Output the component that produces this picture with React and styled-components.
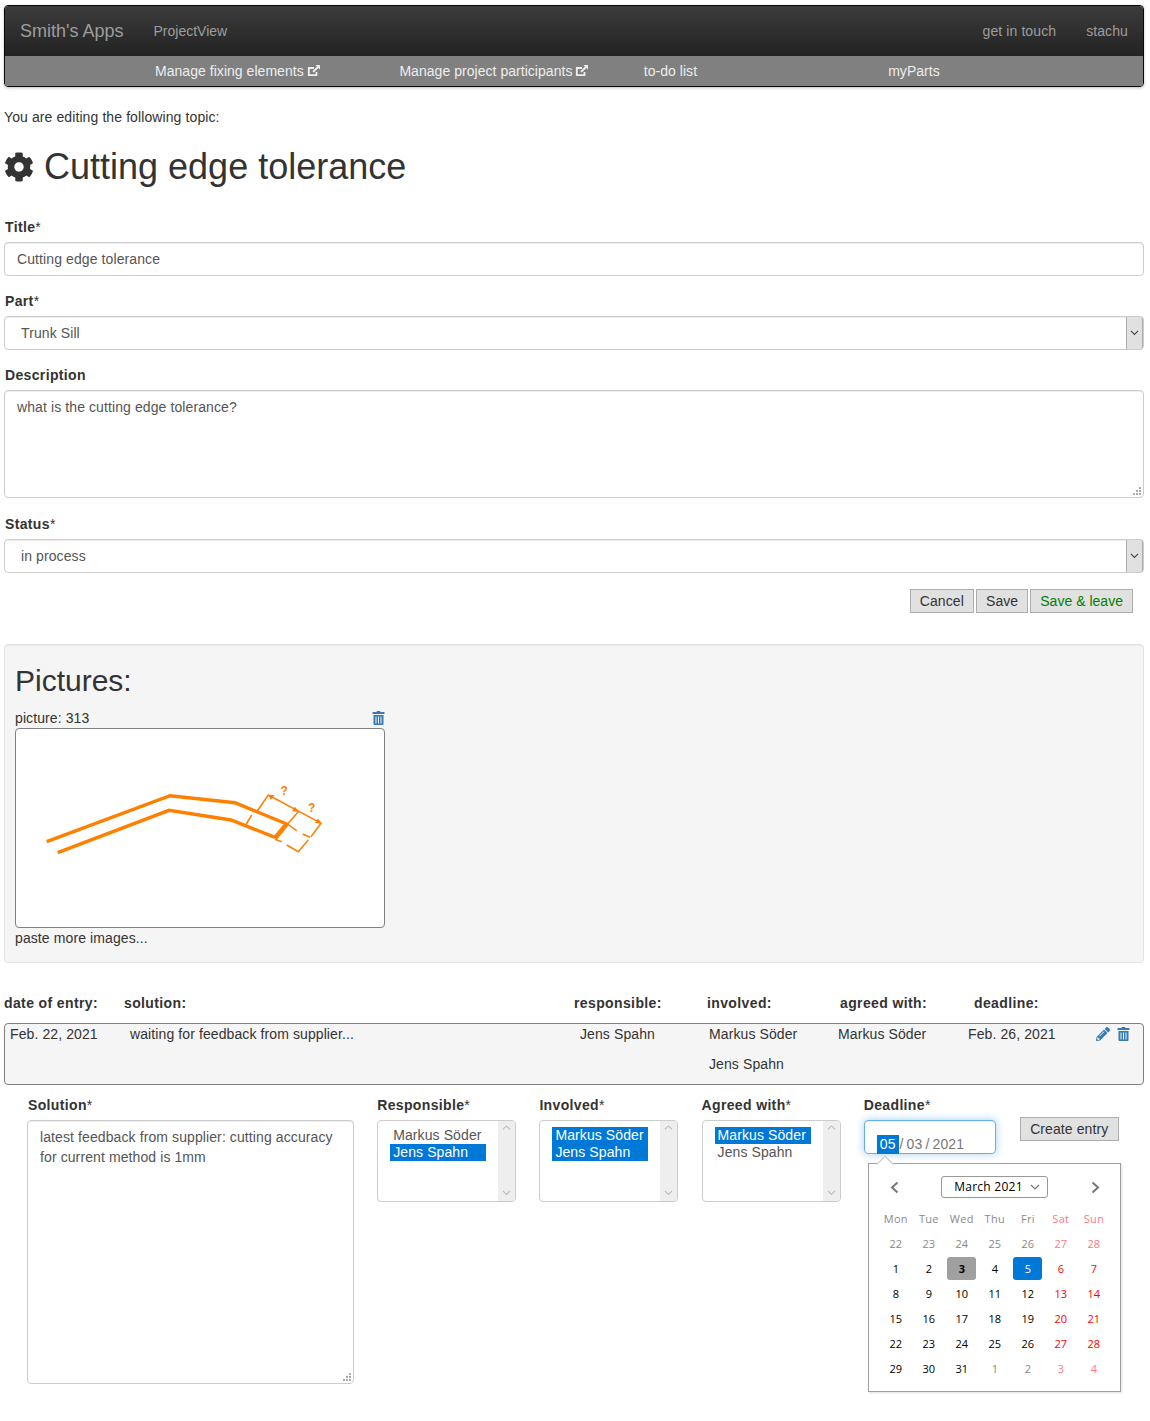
import React from 'react'
import styled, { createGlobalStyle } from 'styled-components'
import { FaCog, FaPencilAlt } from 'react-icons/fa'

const GlobalStyle = createGlobalStyle`
  html, body { margin: 0; padding: 0; background: #fff; }
  body {
    font-family: "Liberation Sans", Arial, sans-serif;
    font-size: 14px;
    line-height: 20px;
    letter-spacing: .1px;
    color: #333;
  }
  * { box-sizing: border-box; }
`

const Page = styled.div`
  width: 1150px;
  height: 1421px;
  padding: 5px 6px 0 4px;
  overflow: hidden;
`

const Navbar = styled.nav`
  height: 82px;
  border: 1px solid #080808;
  border-radius: 4px;
  overflow: hidden;
  box-shadow: 0 1px 3px rgba(0, 0, 0, .25);
`

const NavTop = styled.div`
  height: 50px;
  display: flex;
  align-items: center;
  padding: 0 15px;
  background: linear-gradient(to bottom, #3c3c3c 0, #222 100%);
  color: #9d9d9d;
  letter-spacing: 0;
`

const Brand = styled.span`
  font-size: 18px;
  margin-right: 30px;
`

const Spacer = styled.div`
  flex: 1;
`

const NavRightLink = styled.span`
  margin-left: 30px;
  letter-spacing: .1px;
`

const NavSub = styled.div`
  height: 30px;
  padding-left: 150px;
  display: grid;
  grid-template-columns: repeat(4, 244.4px);
  align-items: center;
  background: #808080;
  color: #eee;
  letter-spacing: .04px;
`

const Intro = styled.p`
  margin: 20px 0 0;
`

const Heading = styled.h1`
  margin: 20px 0 0;
  height: 40px;
  display: flex;
  align-items: center;
  gap: 10px;
  font-size: 36px;
  font-weight: 500;
  line-height: 40px;
  letter-spacing: 0;
`

const Field = styled.div`
  margin-top: ${p => p.$top || 15}px;
`

const Label = styled.label`
  display: block;
  margin-bottom: 5px;
  font-weight: 700;
  height: 20px;
  letter-spacing: .35px;
  padding-left: ${p => (p.$flush ? 0 : 1)}px;
`

const Star = styled.span`
  font-weight: 400;
`

const TextInput = styled.input`
  display: block;
  width: 100%;
  height: 34px;
  padding: 6px 12px;
  border: 1px solid #ccc;
  border-radius: 4px;
  box-shadow: inset 0 1px 1px rgba(0, 0, 0, .075);
  font: inherit;
  letter-spacing: inherit;
  color: #555;
`

const SelectBox = styled.div`
  height: 34px;
  display: flex;
  align-items: center;
  padding-left: 16px;
  border: 1px solid #ccc;
  border-radius: 4px;
  box-shadow: inset 0 1px 1px rgba(0, 0, 0, .075);
  color: #555;
`

const SelectArrow = styled.span`
  margin-left: auto;
  width: 17px;
  align-self: stretch;
  display: flex;
  align-items: center;
  justify-content: center;
  background: #e1e1e1;
  border-left: 1px solid #adadad;
  border-right: 1px solid #adadad;
  border-radius: 0 3px 3px 0;
`

const TextArea = styled.textarea`
  display: block;
  width: 100%;
  height: ${p => p.$height}px;
  padding: 6px 12px;
  border: 1px solid #ccc;
  border-radius: 4px;
  box-shadow: inset 0 1px 1px rgba(0, 0, 0, .075);
  font: inherit;
  letter-spacing: inherit;
  color: #555;
  outline: none;
  resize: vertical;
  &::-webkit-resizer {
    background-color: transparent;
    background-repeat: no-repeat;
    background-size: 2px 2px;
    background-image:
      linear-gradient(#aaa, #aaa), linear-gradient(#aaa, #aaa), linear-gradient(#aaa, #aaa),
      linear-gradient(#aaa, #aaa), linear-gradient(#aaa, #aaa), linear-gradient(#aaa, #aaa);
    background-position: calc(100% - 2px) calc(100% - 2px), calc(100% - 5px) calc(100% - 2px), calc(100% - 8px) calc(100% - 2px),
      calc(100% - 2px) calc(100% - 5px), calc(100% - 5px) calc(100% - 5px), calc(100% - 2px) calc(100% - 8px);
  }
`

const ButtonRow = styled.div`
  display: flex;
  justify-content: flex-end;
  gap: 2px;
  margin: 16px 11px 0 0;
`

const Button = styled.button`
  height: 24px;
  padding: 0 9px;
  border: 1px solid #adadad;
  border-radius: 0;
  background: #e1e1e1;
  font: inherit;
  letter-spacing: ${p => (p.$green ? '.02px' : 'inherit')};
  line-height: 20px;
  color: ${p => (p.$green ? 'green' : '#333')};
`

const Panel = styled.section`
  height: 319px;
  margin-top: 31px;
  padding: 19px 10px 0;
  background: #f5f5f5;
  border: 1px solid #e3e3e3;
  border-radius: 4px;
  box-shadow: inset 0 1px 1px rgba(0, 0, 0, .05);
`

const PanelTitle = styled.h2`
  margin: 0;
  font-size: 30px;
  font-weight: 500;
  line-height: 33px;
  letter-spacing: 0;
`

const PictureCard = styled.div`
  width: 370px;
  margin-top: 11px;
`

const PictureHead = styled.div`
  display: flex;
  justify-content: space-between;
  align-items: center;
  height: 20px;
`

const PictureFrame = styled.div`
  height: 200px;
  background: #fff;
  border: 1px solid #808080;
  border-radius: 4px;
  overflow: hidden;
  svg { display: block; }
`

const TrashLink = styled.span`
  display: flex;
  color: #337ab7;
`

const EntryHead = styled.div`
  display: grid;
  grid-template-columns: 120px 450px 133px 133px 134px 1fr;
  margin-top: 30px;
  font-weight: 700;
  letter-spacing: .38px;
`

const EntryRow = styled.div`
  display: grid;
  grid-template-columns: 120px 450px 129px 129px 130px 1fr auto;
  height: 62px;
  margin-top: 10px;
  padding: 0 13px 0 5px;
  background: #f5f5f5;
  border: 1px solid #808080;
  border-radius: 4px;
`

const EntryCell = styled.div`
  line-height: 30px;
  margin-top: -5px;
`

const EntryActions = styled.div`
  display: flex;
  align-items: center;
  gap: 7px;
  height: 14px;
  margin-top: 3px;
  svg { color: #337ab7; }
`

const EntryForm = styled.div`
  display: flex;
  gap: 23.2px;
  margin-top: 10px;
  padding-left: 23px;
`

const Col = styled.div`
  flex: 0 0 ${p => p.$width}px;
  position: relative;
`

const ListBox = styled.div`
  height: 82px;
  display: flex;
  border: 1px solid #ccc;
  border-radius: 4px;
  overflow: hidden;
  color: #555;
`

const ListOptions = styled.div`
  flex: 1;
  padding: 6px 12px;
`

const ListOption = styled.div`
  width: 96px;
  height: 17px;
  padding: 0 3px;
  line-height: 17px;
  white-space: nowrap;
  background: ${p => (p.$selected ? '#0078d7' : 'transparent')};
  color: ${p => (p.$selected ? '#fff' : '#555')};
`

const Scrollbar = styled.div`
  width: 17px;
  display: flex;
  flex-direction: column;
  justify-content: space-between;
  align-items: center;
  padding: 4px 0 6px;
  background: #eee;
`

const DateWrap = styled.div`
  position: relative;
`

const DateInput = styled.div`
  height: 34px;
  padding: 14px 0 0 12px;
  border: 1px solid #66afe9;
  border-radius: 4px;
  box-shadow: inset 0 1px 1px rgba(0, 0, 0, .075), 0 0 8px rgba(102, 175, 233, .6);
  color: #777;
  line-height: 19px;
  white-space: nowrap;
  word-spacing: -.9px;
`

const DateSelected = styled.span`
  display: inline-block;
  background: #0078d7;
  color: #fff;
  padding: 0 3px;
  margin-right: 1px;
`

const CreateButton = styled(Button)`
  flex: none;
  align-self: flex-start;
  padding: 0 9.5px;
  margin: 22px 0 0 .7px;
`

const Popup = styled.div`
  position: absolute;
  top: 43px;
  left: 4px;
  width: 253px;
  height: 229px;
  padding: 12px 9px 0 10px;
  background: #fff;
  border: 1px solid #a0a0a0;
  box-shadow: 1px 1px 2px rgba(0, 0, 0, .12);
  font-family: "Open Sans", "Noto Sans", sans-serif;
  font-size: 11px;
  letter-spacing: 0;
  color: #000;
  z-index: 2;
  &::before {
    content: '';
    position: absolute;
    top: -6px;
    left: 10px;
    width: 11px;
    height: 11px;
    background: #fff;
    border-left: 1px solid #c4c4c4;
    border-top: 1px solid #c4c4c4;
    transform: rotate(45deg);
  }
`

const CalHead = styled.div`
  display: flex;
  align-items: center;
  justify-content: space-between;
  height: 22px;
  padding: 0 11px 0 11px;
`

const MonthSelect = styled.div`
  width: 107px;
  height: 22px;
  display: flex;
  align-items: center;
  justify-content: space-between;
  padding: 0 7px 0 12px;
  border: 1px solid #999;
  border-radius: 3px;
  font-size: 12px;
  letter-spacing: .25px;
  white-space: nowrap;
`

const CalGrid = styled.div`
  display: grid;
  grid-template-columns: repeat(7, 33px);
  grid-auto-rows: 25px;
  margin: 8px 0 0 .6px;
`

const CalCell = styled.div`
  display: flex;
  align-items: center;
  justify-content: center;
`

const DayBadge = styled.span`
  width: 29px;
  height: 23px;
  display: flex;
  align-items: center;
  justify-content: center;
  border-radius: 3px;
  background: ${p => (p.$state === 'today' ? '#a0a0a0' : p.$state === 'active' ? '#0078d7' : 'transparent')};
  font-weight: ${p => (p.$state === 'today' ? 700 : 400)};
  color: ${p => {
    if (p.$state === 'active') return '#fff'
    if (p.$muted) return p.$weekend ? '#fb7a84' : '#888'
    return p.$weekend ? '#f00' : '#000'
  }};
`

const WeekName = styled(CalCell)`
  letter-spacing: .3px;
  color: ${p => (p.$weekend ? '#fb7a84' : '#8a8a8a')};
`

const Caret = ({ size = 9, color = '#444', up }) => (
  <svg width={size} height={size * 0.6} viewBox="0 0 10 6" style={up ? { transform: 'rotate(180deg)' } : undefined}>
    <path d="M1 1l4 4 4-4" fill="none" stroke={color} strokeWidth="1.2" />
  </svg>
)

const Chevron = ({ left }) => (
  <svg width="9" height="13" viewBox="0 0 9 13">
    <path d={left ? 'M7.5 1.5L2 6.5l5.5 5' : 'M1.5 1.5L7 6.5l-5.5 5'} fill="none" stroke="#777" strokeWidth="2" />
  </svg>
)

const ShareIcon = () => (
  <svg width="13" height="12" viewBox="0 0 13 12" style={{ marginLeft: 3, verticalAlign: -1 }}>
    <path d="M9.500 7v3.200H1.800V3H7" fill="none" stroke="#eee" strokeWidth="1.800" />
    <path d="M8.500 0H13v4.500l-1.600-1.600-4.600 4.700-1.400-1.400 4.600-4.700z" fill="#eee" />
  </svg>
)

const TrashIcon = () => (
  <svg width="13" height="14" viewBox="0 0 12 14" fill="currentColor">
    <path d="M4.500 0h3l.5 1h3.500a.5.5 0 0 1 .5.5V3H0V1.500a.5.5 0 0 1 .5-.5H4z" />
    <path fillRule="evenodd" d="M1 4h10v9a1 1 0 0 1-1 1H2a1 1 0 0 1-1-1zm2 1.500V12.500h1V5.500zm2.500 0V12.500h1V5.500zm2.500 0V12.500h1V5.500z" />
  </svg>
)

const ORANGE = '#ff8000'

const Sketch = () => (
  <svg width="368" height="198" viewBox="16 729 368 198" fill="none" stroke={ORANGE}>
    <path d="M46.700 841.700L170 795.700l65 7 51.700 21.300" strokeWidth="3.400" />
    <path d="M57.700 852.700L169 810.300l62 9.700 44 17.300" strokeWidth="3.400" />
    <path d="M275 838.300l12.300-15" strokeWidth="4.500" />
    <g strokeWidth="1.500">
      <path d="M268.300 795l-11.600 16.700M251.700 815l-6 10" />
      <path d="M268.300 795l53 28.300" />
      <path d="M298.300 811.700l-11.600 13.300" />
      <path d="M321 823.300l-10 13.400" />
      <path d="M287.300 824l9.400 6.700M302.700 834l7.300 3.300" />
      <path d="M275 839.300l6.700 2.400M286.700 845l11.600 6.700 10-11.700" />
    </g>
    <g fill={ORANGE} stroke="none">
      <path d="M267.500 794.500l7 .8-3.500 4.500z" />
      <path d="M299 812l-7-.8 3-4.500z" />
      <path d="M322 823.800l-7-.8 3-4.500z" />
      <text x="280.500" y="795" fontSize="12" fontWeight="700" fontFamily="Liberation Sans, sans-serif">?</text>
      <text x="308" y="812" fontSize="12" fontWeight="700" fontFamily="Liberation Sans, sans-serif">?</text>
    </g>
  </svg>
)

const weekNames = ['Mon', 'Tue', 'Wed', 'Thu', 'Fri', 'Sat', 'Sun']

const days = [
  ...[22, 23, 24, 25, 26, 27, 28].map(d => ({ d, muted: true })),
  ...Array.from({ length: 28 }, (_, i) => ({ d: i + 1 })),
  { d: 29 }, { d: 30 }, { d: 31 },
  ...[1, 2, 3, 4].map(d => ({ d, muted: true })),
]

const MultiSelect = ({ options }) => (
  <ListBox>
    <ListOptions>
      {options.map(o => (
        <ListOption key={o.name} $selected={o.selected}>{o.name}</ListOption>
      ))}
    </ListOptions>
    <Scrollbar>
      <Caret color="#bbb" up />
      <Caret color="#bbb" />
    </Scrollbar>
  </ListBox>
)

const App = () => {
  return (
    <Page>
      <GlobalStyle />
      <Navbar>
        <NavTop>
          <Brand>Smith's Apps</Brand>
          <span>ProjectView</span>
          <Spacer />
          <NavRightLink>get in touch</NavRightLink>
          <NavRightLink>stachu</NavRightLink>
        </NavTop>
        <NavSub>
          <span>Manage fixing elements<ShareIcon /></span>
          <span>Manage project participants<ShareIcon /></span>
          <span>to-do list</span>
          <span>myParts</span>
        </NavSub>
      </Navbar>

      <Intro>You are editing the following topic:</Intro>
      <Heading><FaCog size={30} />Cutting edge tolerance</Heading>

      <Field $top={30}>
        <Label>Title<Star>*</Star></Label>
        <TextInput readOnly value="Cutting edge tolerance" />
      </Field>
      <Field>
        <Label>Part<Star>*</Star></Label>
        <SelectBox>Trunk Sill<SelectArrow><Caret /></SelectArrow></SelectBox>
      </Field>
      <Field>
        <Label>Description</Label>
        <TextArea $height={108} readOnly value="what is the cutting edge tolerance?" />
      </Field>
      <Field $top={16}>
        <Label>Status<Star>*</Star></Label>
        <SelectBox>in process<SelectArrow><Caret /></SelectArrow></SelectBox>
      </Field>

      <ButtonRow>
        <Button>Cancel</Button>
        <Button>Save</Button>
        <Button $green>Save &amp; leave</Button>
      </ButtonRow>

      <Panel>
        <PanelTitle>Pictures:</PanelTitle>
        <PictureCard>
          <PictureHead>
            <span>picture: 313</span>
            <TrashLink><TrashIcon /></TrashLink>
          </PictureHead>
          <PictureFrame><Sketch /></PictureFrame>
          <div>paste more images...</div>
        </PictureCard>
      </Panel>

      <EntryHead>
        <span>date of entry:</span>
        <span>solution:</span>
        <span>responsible:</span>
        <span>involved:</span>
        <span>agreed with:</span>
        <span>deadline:</span>
      </EntryHead>
      <EntryRow>
        <EntryCell>Feb. 22, 2021</EntryCell>
        <EntryCell>waiting for feedback from supplier...</EntryCell>
        <EntryCell>Jens Spahn</EntryCell>
        <EntryCell>Markus Söder<br />Jens Spahn</EntryCell>
        <EntryCell>Markus Söder</EntryCell>
        <EntryCell>Feb. 26, 2021</EntryCell>
        <EntryActions>
          <FaPencilAlt size={14} />
          <TrashIcon />
        </EntryActions>
      </EntryRow>

      <EntryForm>
        <Col $width={327}>
          <Label>Solution<Star>*</Star></Label>
          <TextArea
            $height={264}
            readOnly
            value={'latest feedback from supplier: cutting accuracy for current method is 1mm'}
          />
        </Col>
        <Col $width={139}>
          <Label $flush>Responsible<Star>*</Star></Label>
          <MultiSelect options={[{ name: 'Markus Söder' }, { name: 'Jens Spahn', selected: true }]} />
        </Col>
        <Col $width={139}>
          <Label $flush>Involved<Star>*</Star></Label>
          <MultiSelect options={[{ name: 'Markus Söder', selected: true }, { name: 'Jens Spahn', selected: true }]} />
        </Col>
        <Col $width={139}>
          <Label $flush>Agreed with<Star>*</Star></Label>
          <MultiSelect options={[{ name: 'Markus Söder', selected: true }, { name: 'Jens Spahn' }]} />
        </Col>
        <Col $width={132}>
          <Label $flush>Deadline<Star>*</Star></Label>
          <DateWrap>
            <DateInput><DateSelected>05</DateSelected>/ 03 / 2021</DateInput>
            <Popup>
              <CalHead>
                <Chevron left />
                <MonthSelect>March 2021<Caret size={10} color="#777" /></MonthSelect>
                <Chevron />
              </CalHead>
              <CalGrid>
                {weekNames.map((n, i) => (
                  <WeekName key={n} $weekend={i > 4}>{n}</WeekName>
                ))}
                {days.map((item, i) => (
                  <CalCell key={i}>
                    <DayBadge
                      $muted={item.muted}
                      $weekend={i % 7 > 4}
                      $state={!item.muted && item.d === 3 ? 'today' : !item.muted && item.d === 5 ? 'active' : undefined}
                    >
                      {item.d}
                    </DayBadge>
                  </CalCell>
                ))}
              </CalGrid>
            </Popup>
          </DateWrap>
        </Col>
        <CreateButton>Create entry</CreateButton>
      </EntryForm>
    </Page>
  )
}

export default App
